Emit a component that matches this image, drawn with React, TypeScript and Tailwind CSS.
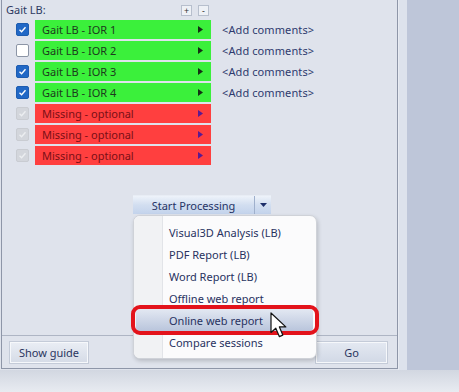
import React from 'react';

const font = { fontFamily: '"Noto Sans", "Open Sans", sans-serif' };

type RowKind = 'checked' | 'unchecked' | 'disabled';

const rows: { label: string; kind: RowKind; ok: boolean }[] = [
  { label: 'Gait LB - IOR 1', kind: 'checked', ok: true },
  { label: 'Gait LB - IOR 2', kind: 'unchecked', ok: true },
  { label: 'Gait LB - IOR 3', kind: 'checked', ok: true },
  { label: 'Gait LB - IOR 4', kind: 'checked', ok: true },
  { label: 'Missing - optional', kind: 'disabled', ok: false },
  { label: 'Missing - optional', kind: 'disabled', ok: false },
  { label: 'Missing - optional', kind: 'disabled', ok: false },
];

const menuItems = [
  'Visual3D Analysis (LB)',
  'PDF Report (LB)',
  'Word Report (LB)',
  'Offline web report',
  'Online web report',
  'Compare sessions',
];

function Check({ kind }: { kind: RowKind }) {
  if (kind === 'unchecked') {
    return <div className="w-[13px] h-[13px] rounded-[2px] border border-[#8c95a6] bg-white" />;
  }
  const disabled = kind === 'disabled';
  return (
    <div
      className={`w-[13px] h-[13px] rounded-[2px] flex items-center justify-center ${disabled ? 'bg-[#d3d6dc] border border-[#c9ccd2]' : 'bg-[#2168c6] border border-[#1d5cb0]'}`}
    >
      <svg width="9" height="9" viewBox="0 0 9 9">
        <path d="M1.5 4.8 L3.6 6.8 L7.5 2.3" fill="none" stroke={disabled ? '#eceef1' : '#ffffff'} strokeWidth="1.4" />
      </svg>
    </div>
  );
}

function Arrow() {
  return (
    <svg width="22" height="27" viewBox="0 0 22 27">
      <path
        d="M1 1 L1 20.5 L5.8 16.2 L9.3 24.6 L12.8 23.1 L9.4 14.9 L15.8 14.9 Z"
        fill="#ffffff"
        stroke="#111111"
        strokeWidth="1.2"
        strokeLinejoin="round"
      />
    </svg>
  );
}

export default function App() {
  return (
    <div className="relative w-[459px] h-[392px] overflow-hidden bg-[#dfe3ec] flex flex-col" style={font}>
      <div className="flex h-[370px]">
        <div className="w-[397px] h-[369px] ml-[1px] border-l border-r border-b border-[#8e96a8] flex flex-col">
          <div className="flex items-center h-[19px] pl-[4px] pr-[188px] justify-between">
            <span className="text-[11px] text-[#2e3a62] leading-none">Gait LB:</span>
            <div className="flex gap-[6px] mt-[2px]">
              <div className="w-[11px] h-[11px] border border-[#b7bfcd] bg-[#eef1f6] flex items-center justify-center text-[9px] leading-none text-[#333]">+</div>
              <div className="w-[11px] h-[11px] border border-[#b7bfcd] bg-[#eef1f6] flex items-center justify-center text-[9px] leading-none text-[#333]">-</div>
            </div>
          </div>
          <div className="flex flex-col gap-[2px] mt-[1px]">
            {rows.map((r, i) => (
              <div key={i} className="flex items-center h-[19px]">
                <div className="w-[33px] flex justify-end pr-[6px]">
                  <Check kind={r.kind} />
                </div>
                <div
                  className={`w-[176px] h-[19px] flex items-center justify-between pl-[7px] pr-[8px] ${r.ok ? 'bg-[#3bf03b] text-[#1d3a1d]' : 'bg-[#ff3f3f] text-[#7a0f16]'}`}
                >
                  <span className="text-[11px] leading-none">{r.label}</span>
                  <svg width="5" height="7" viewBox="0 0 5 7">
                    <path d="M0 0 L5 3.5 L0 7 Z" fill={r.ok ? '#153015' : '#5b1a90'} />
                  </svg>
                </div>
                {r.ok && (
                  <span className="ml-[11px] text-[11px] leading-none text-[#2e3a6e] tracking-[0.1px]">&lt;Add comments&gt;</span>
                )}
              </div>
            ))}
          </div>
          <div className="flex-1" />
          <div className="flex justify-center pl-[5px] mb-[121px]">
            <div className="flex h-[19px] w-[138px] border-t border-[#e8edf5] bg-gradient-to-b from-[#eef3fa] via-[#d2def0] to-[#c3d3ec]">
              <div className="flex-1 flex items-center justify-center text-[11px] text-[#263466] leading-none">Start Processing</div>
              <div className="w-[17px] border-l border-[#9fb0cc] flex items-center justify-center">
                <svg width="7" height="4" viewBox="0 0 7 4">
                  <path d="M0 0 L7 0 L3.5 4 Z" fill="#1e2f6a" />
                </svg>
              </div>
            </div>
          </div>
          <div className="h-[33px] border-t border-[#aeb5c4] flex items-center justify-between pl-[8px] pr-[10px]">
            <div className="w-[78px] h-[21px] border border-[#f6f8fb] bg-gradient-to-b from-[#e9edf4] to-[#d6dce7] flex items-center justify-center text-[11px] text-[#2a3560] leading-none shadow-[0_0_0_1px_#c4cbd8]">
              Show guide
            </div>
            <div className="w-[71px] h-[21px] border border-[#f6f8fb] bg-gradient-to-b from-[#e3e8f1] to-[#d2d9e6] flex items-center justify-center text-[11px] text-[#2a3560] leading-none shadow-[0_0_0_1px_#c4cbd8]">
              Go
            </div>
          </div>
        </div>
        <div className="w-[9px] bg-[#dde2ec] border-l border-[#e8ebf2]" />
        <div className="flex-1 bg-[#bec6d9]" />
      </div>
      <div className="flex-1 bg-gradient-to-b from-[#d2d7e1] to-[#e8ebf1]" />

      <div className="absolute left-[133px] top-[215px] w-[184px] h-[144px] rounded-[7px] bg-[#fbfbfc] border border-[#cfd2d8] shadow-[1px_2px_4px_rgba(0,0,0,0.18)] flex overflow-hidden">
        <div className="w-[29px] bg-[#f1f2f4] border-r border-[#e2e4e8]" />
        <div className="flex-1 flex flex-col pt-[5px]">
          {menuItems.map((m, i) => (
            <div
              key={m}
              className={`h-[22px] flex items-center pl-[6px] text-[11px] leading-none text-[#28325f] ${i === 4 ? '-ml-[27px] pl-[33px] mr-[3px] rounded-[3px] bg-gradient-to-b from-[#e3e8f2] to-[#b9c5dc]' : ''}`}
            >
              {m}
            </div>
          ))}
        </div>
      </div>
      <div className="absolute left-[131px] top-[305px] w-[188px] h-[30px] rounded-[9px] border-[4px] border-[#e3131b]" />
      <div className="absolute left-[270px] top-[312px]">
        <Arrow />
      </div>
    </div>
  );
}
